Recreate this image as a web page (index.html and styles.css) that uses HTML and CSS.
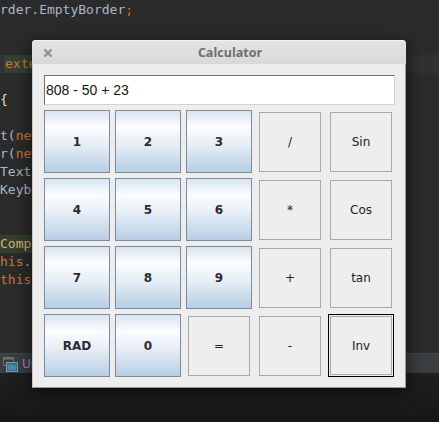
FILE: index.html
```html
<!DOCTYPE html>
<html>
<head>
<meta charset="utf-8">
<link rel="stylesheet" href="styles.css">
</head>
<body>
<div class="screen">
  <div class="editor">
    <div class="line"><span class="id">rder.EmptyBorder</span><span class="kw">;</span></div>
    <div class="line"></div>
    <div class="line"></div>
    <div class="line cur"><span class="match"><span class="kw">exte</span></span></div>
    <div class="line"></div>
    <div class="line"><span class="brace">{</span></div>
    <div class="line"></div>
    <div class="line"><span class="id">t(</span><span class="kw">new</span></div>
    <div class="line"><span class="id">r(</span><span class="kw">new</span></div>
    <div class="line"><span class="id">TextF</span></div>
    <div class="line"><span class="id">Keybo</span></div>
    <div class="line"></div>
    <div class="line"></div>
    <div class="line"><span class="match2">Compo</span></div>
    <div class="line"><span class="kw">his</span><span class="id">.g</span></div>
    <div class="line"><span class="kw">this</span><span class="id">.</span></div>
  </div>
  <div class="status">
    <svg class="sicon" width="16" height="16" viewBox="0 0 16 16">
      <rect x="1.5" y="1.5" width="10" height="8" fill="none" stroke="#6d7072" stroke-width="1"/>
      <rect x="1.5" y="1.5" width="10" height="2" fill="#6d7072"/>
      <rect x="4.5" y="6.5" width="11" height="9" fill="#3d6f8a" stroke="#6f9cb5" stroke-width="1"/>
      <rect x="6" y="9" width="8" height="5" fill="#4f89a8"/>
    </svg>
    <span class="stext">Ur</span>
  </div>
  <div class="below"></div>

  <div class="dialog">
    <div class="titlebar">
      <svg class="close" width="8" height="8" viewBox="0 0 8 8">
        <path d="M1 1 L7 7 M7 1 L1 7" stroke="#8c8c8c" stroke-width="2" stroke-linecap="square"/>
      </svg>
      <span class="title">Calculator</span>
    </div>
    <div class="content">
      <div class="display">808 - 50 + 23</div>
      <div class="keys">
        <button class="key num">1</button>
        <button class="key num">2</button>
        <button class="key num">3</button>
        <button class="key op">/</button>
        <button class="key op">Sin</button>
        <button class="key num">4</button>
        <button class="key num">5</button>
        <button class="key num">6</button>
        <button class="key op">*</button>
        <button class="key op">Cos</button>
        <button class="key num">7</button>
        <button class="key num">8</button>
        <button class="key num">9</button>
        <button class="key op">+</button>
        <button class="key op">tan</button>
        <button class="key num">RAD</button>
        <button class="key num">0</button>
        <button class="key op">=</button>
        <button class="key op">-</button>
        <button class="key op focus">Inv</button>
      </div>
    </div>
  </div>
</div>
</body>
</html>
```

FILE: styles.css
```css
html, body {
  margin: 0;
  padding: 0;
  background: #2b2b2b;
}

.screen {
  position: relative;
  width: 439px;
  height: 422px;
  overflow: hidden;
  display: grid;
  grid-template-rows: 353px 20px 1fr;
  background: #2b2b2b;
}

.editor {
  font-family: "DejaVu Sans Mono", monospace;
  font-size: 13px;
  color: #a9b7c6;
  padding-top: 1px;
}

.line {
  height: 18px;
  line-height: 18px;
  white-space: pre;
}

.line.cur {
  background: #313131;
}

.id { color: #a9b7c6; }
.kw { color: #cc7832; }
.brace { color: #e6dfb8; }

.match {
  display: inline-block;
  margin-left: 4px;
  padding-left: 1px;
  width: 60px;
  background: #344033;
}

.match2 {
  display: inline-block;
  width: 60px;
  background: #343f30;
  color: #d7b46c;
}

.status {
  background: #3b3e40;
  border-top: 1px solid #45484a;
  display: flex;
  align-items: center;
  gap: 4px;
  padding-left: 2px;
  font-family: "DejaVu Sans", sans-serif;
  font-size: 12px;
}

.sicon { display: block; }

.stext { color: #9b8fae; }

.below {
  background: linear-gradient(#1f1f1f, #171717);
}

/* dialog window floating over the editor */
.dialog {
  position: absolute;
  left: 32px;
  top: 40px;
  width: 374px;
  height: 348px;
  box-sizing: border-box;
  background: #ededed;
  border: 1px solid #9a9a9a;
  border-left-color: #c4c4c4;
  border-top: none;
  border-radius: 4px 4px 0 0;
  box-shadow: 0 4px 18px rgba(0, 0, 0, 0.65);
  display: flex;
  flex-direction: column;
}

.titlebar {
  height: 24px;
  flex: none;
  display: flex;
  align-items: center;
  background: linear-gradient(#e3e3e3, #d9d9d9);
  border-radius: 4px 4px 0 0;
  border-top: 1px solid #f2f2f2;
  box-sizing: border-box;
  margin: 0 -1px;
}

.close {
  margin-left: 12px;
  display: block;
}

.title {
  flex: 1;
  text-align: center;
  padding-left: 10px;
  padding-right: 8px;
  font-family: "Open Sans", sans-serif;
  font-weight: bold;
  font-size: 12.5px;
  color: #6e6e6e;
}

.content {
  padding: 11px 10px 0 11px;
  display: flex;
  flex-direction: column;
  gap: 5px;
}

.display {
  height: 30px;
  box-sizing: border-box;
  background: #ffffff;
  border-top: 1px solid #6f6f6f;
  border-left: 1px solid #6f6f6f;
  border-bottom: 1px solid #d2d2d2;
  border-right: 1px solid #d2d2d2;
  font-family: "Liberation Sans", sans-serif;
  font-size: 14px;
  line-height: 28px;
  padding-left: 1px;
  color: #141414;
}

.keys {
  display: grid;
  grid-template-columns: repeat(5, 66px);
  grid-template-rows: repeat(4, 63px);
  gap: 5px;
}

.key {
  margin: 0;
  padding: 0;
  box-sizing: border-box;
  cursor: default;
}

.num {
  border: 1px solid #7c8c9c;
  background: linear-gradient(180deg, #d8e4f0 0%, #fbfdff 26%, #e6eef6 55%, #b8cee4 100%);
  font-family: "DejaVu Sans", sans-serif;
  font-weight: bold;
  font-size: 12px;
  color: #2b2b33;
}

.op {
  margin: 2px 2px 1px 2px;
  border: 1px solid #a9a9a9;
  background: #eeeeee;
  font-family: "DejaVu Sans", sans-serif;
  font-size: 12px;
  color: #222222;
}

.op.focus {
  margin: 0;
  border: 1px solid #000000;
  box-shadow: inset 0 0 0 1px #eeeeee, inset 0 0 0 2px #a9a9a9;
}
```
